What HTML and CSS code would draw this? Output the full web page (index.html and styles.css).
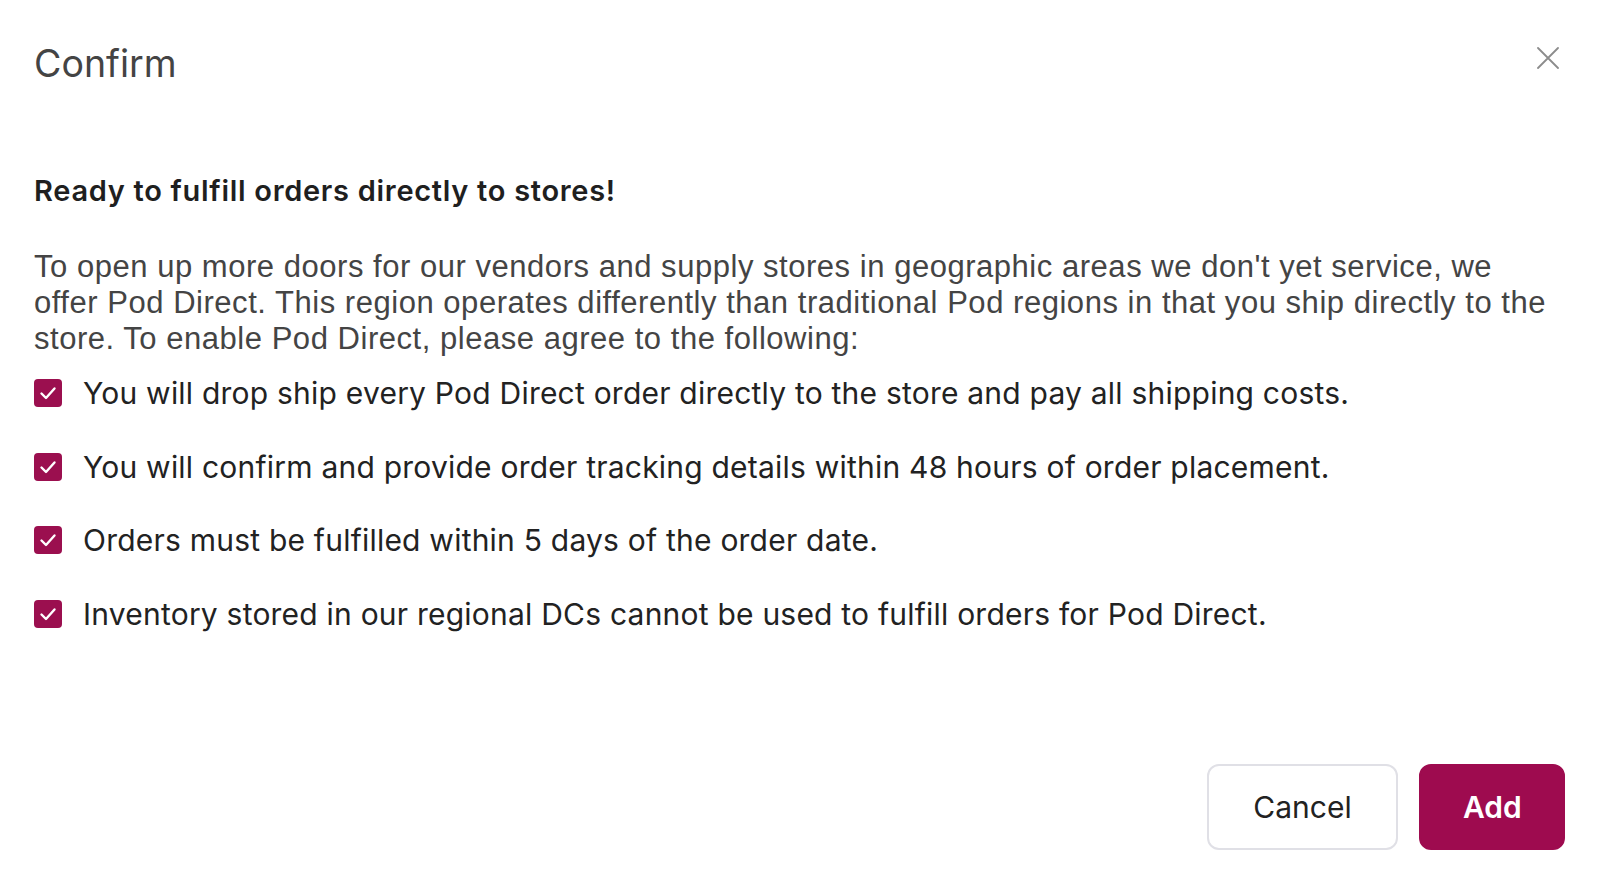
FILE: index.html
```html
<!DOCTYPE html>
<html lang="en">
<head>
<meta charset="utf-8">
<title>Confirm</title>
<link rel="stylesheet" href="styles.css">
</head>
<body>
<div class="dialog">
  <header class="head">
    <h1 class="title">Confirm</h1>
    <button class="close" aria-label="Close">
      <svg width="22" height="22" viewBox="0 0 22 22"><path d="M1 1 L21 21 M21 1 L1 21" stroke="#8c8c8c" stroke-width="1.8" fill="none" stroke-linecap="round"/></svg>
    </button>
  </header>
  <main class="body">
    <h2 class="lead">Ready to fulfill orders directly to stores!</h2>
    <p class="intro">To open up more doors for our vendors and supply stores in geographic areas we don't yet service, we<br>offer Pod Direct. This region operates differently than traditional Pod regions in that you ship directly to the<br>store. To enable Pod Direct, please agree to the following:</p>
    <ul class="terms">
      <li class="term"><span class="box"><svg width="28" height="28" viewBox="0 0 28 28"><path d="M7.5 14.5 L12 19 L20.5 9.5" stroke="#fff" stroke-width="2.4" fill="none" stroke-linecap="round" stroke-linejoin="round"/></svg></span><span class="term-text">You will drop ship every Pod Direct order directly to the store and pay all shipping costs.</span></li>
      <li class="term"><span class="box"><svg width="28" height="28" viewBox="0 0 28 28"><path d="M7.5 14.5 L12 19 L20.5 9.5" stroke="#fff" stroke-width="2.4" fill="none" stroke-linecap="round" stroke-linejoin="round"/></svg></span><span class="term-text">You will confirm and provide order tracking details within 48 hours of order placement.</span></li>
      <li class="term"><span class="box"><svg width="28" height="28" viewBox="0 0 28 28"><path d="M7.5 14.5 L12 19 L20.5 9.5" stroke="#fff" stroke-width="2.4" fill="none" stroke-linecap="round" stroke-linejoin="round"/></svg></span><span class="term-text">Orders must be fulfilled within 5 days of the order date.</span></li>
      <li class="term"><span class="box"><svg width="28" height="28" viewBox="0 0 28 28"><path d="M7.5 14.5 L12 19 L20.5 9.5" stroke="#fff" stroke-width="2.4" fill="none" stroke-linecap="round" stroke-linejoin="round"/></svg></span><span class="term-text">Inventory stored in our regional DCs cannot be used to fulfill orders for Pod Direct.</span></li>
    </ul>
  </main>
  <footer class="actions">
    <button class="btn btn-secondary">Cancel</button>
    <button class="btn btn-primary">Add</button>
  </footer>
</div>
</body>
</html>
```
FILE: styles.css
```css
* { box-sizing: border-box; }
html, body { margin: 0; padding: 0; background: #fff; }
body { font-family: Inter, "Liberation Sans", sans-serif; color: #222; }

.dialog {
  width: 1600px;
  height: 886px;
  padding: 40px 35px 36px 34px;
  display: flex;
  flex-direction: column;
}

.head {
  display: flex;
  justify-content: space-between;
  align-items: flex-start;
}
.title {
  margin: 0;
  font-size: 37.5px;
  line-height: 48px;
  font-weight: 400;
  color: #444;
}
.close {
  border: 0;
  background: none;
  padding: 0;
  margin: 7px 6px 0 0;
  width: 22px;
  height: 22px;
  cursor: pointer;
}
.close svg { display: block; }

.body { flex: 1; }
.lead {
  margin: 85px 0 0;
  font-size: 29px;
  line-height: 36px;
  font-weight: 600;
  letter-spacing: 0.7px;
  color: #1f1f1f;
}
.intro {
  margin: 40px 0 0;
  font-family: "Liberation Sans", Arial, sans-serif;
  font-size: 31px;
  line-height: 36px;
  letter-spacing: 0.53px;
  color: #444;
  white-space: nowrap;
}
.terms {
  list-style: none;
  margin: 18px 0 0;
  padding: 0;
  display: flex;
  flex-direction: column;
  gap: 37.5px;
}
.term {
  display: flex;
  align-items: center;
  gap: 21px;
  font-size: 30px;
  line-height: 36px;
  letter-spacing: 0.22px;
  color: #222;
}
.box {
  width: 28px;
  height: 28px;
  border-radius: 4px;
  background: #9b0f4f;
  flex: none;
}
.box svg { display: block; }

.actions {
  display: flex;
  justify-content: flex-end;
  gap: 21px;
}
.btn {
  height: 86px;
  border-radius: 12px;
  font-family: Inter, "Liberation Sans", sans-serif;
  font-size: 30px;
  padding: 0 42px;
  cursor: pointer;
}
.btn-secondary {
  background: #fff;
  border: 2px solid #e0e0e6;
  color: #222;
  width: 191px;
}
.btn-primary {
  background: #9e0b4f;
  border: 2px solid #9e0b4f;
  color: #fff;
  font-weight: 600;
  width: 146px;
}
```
